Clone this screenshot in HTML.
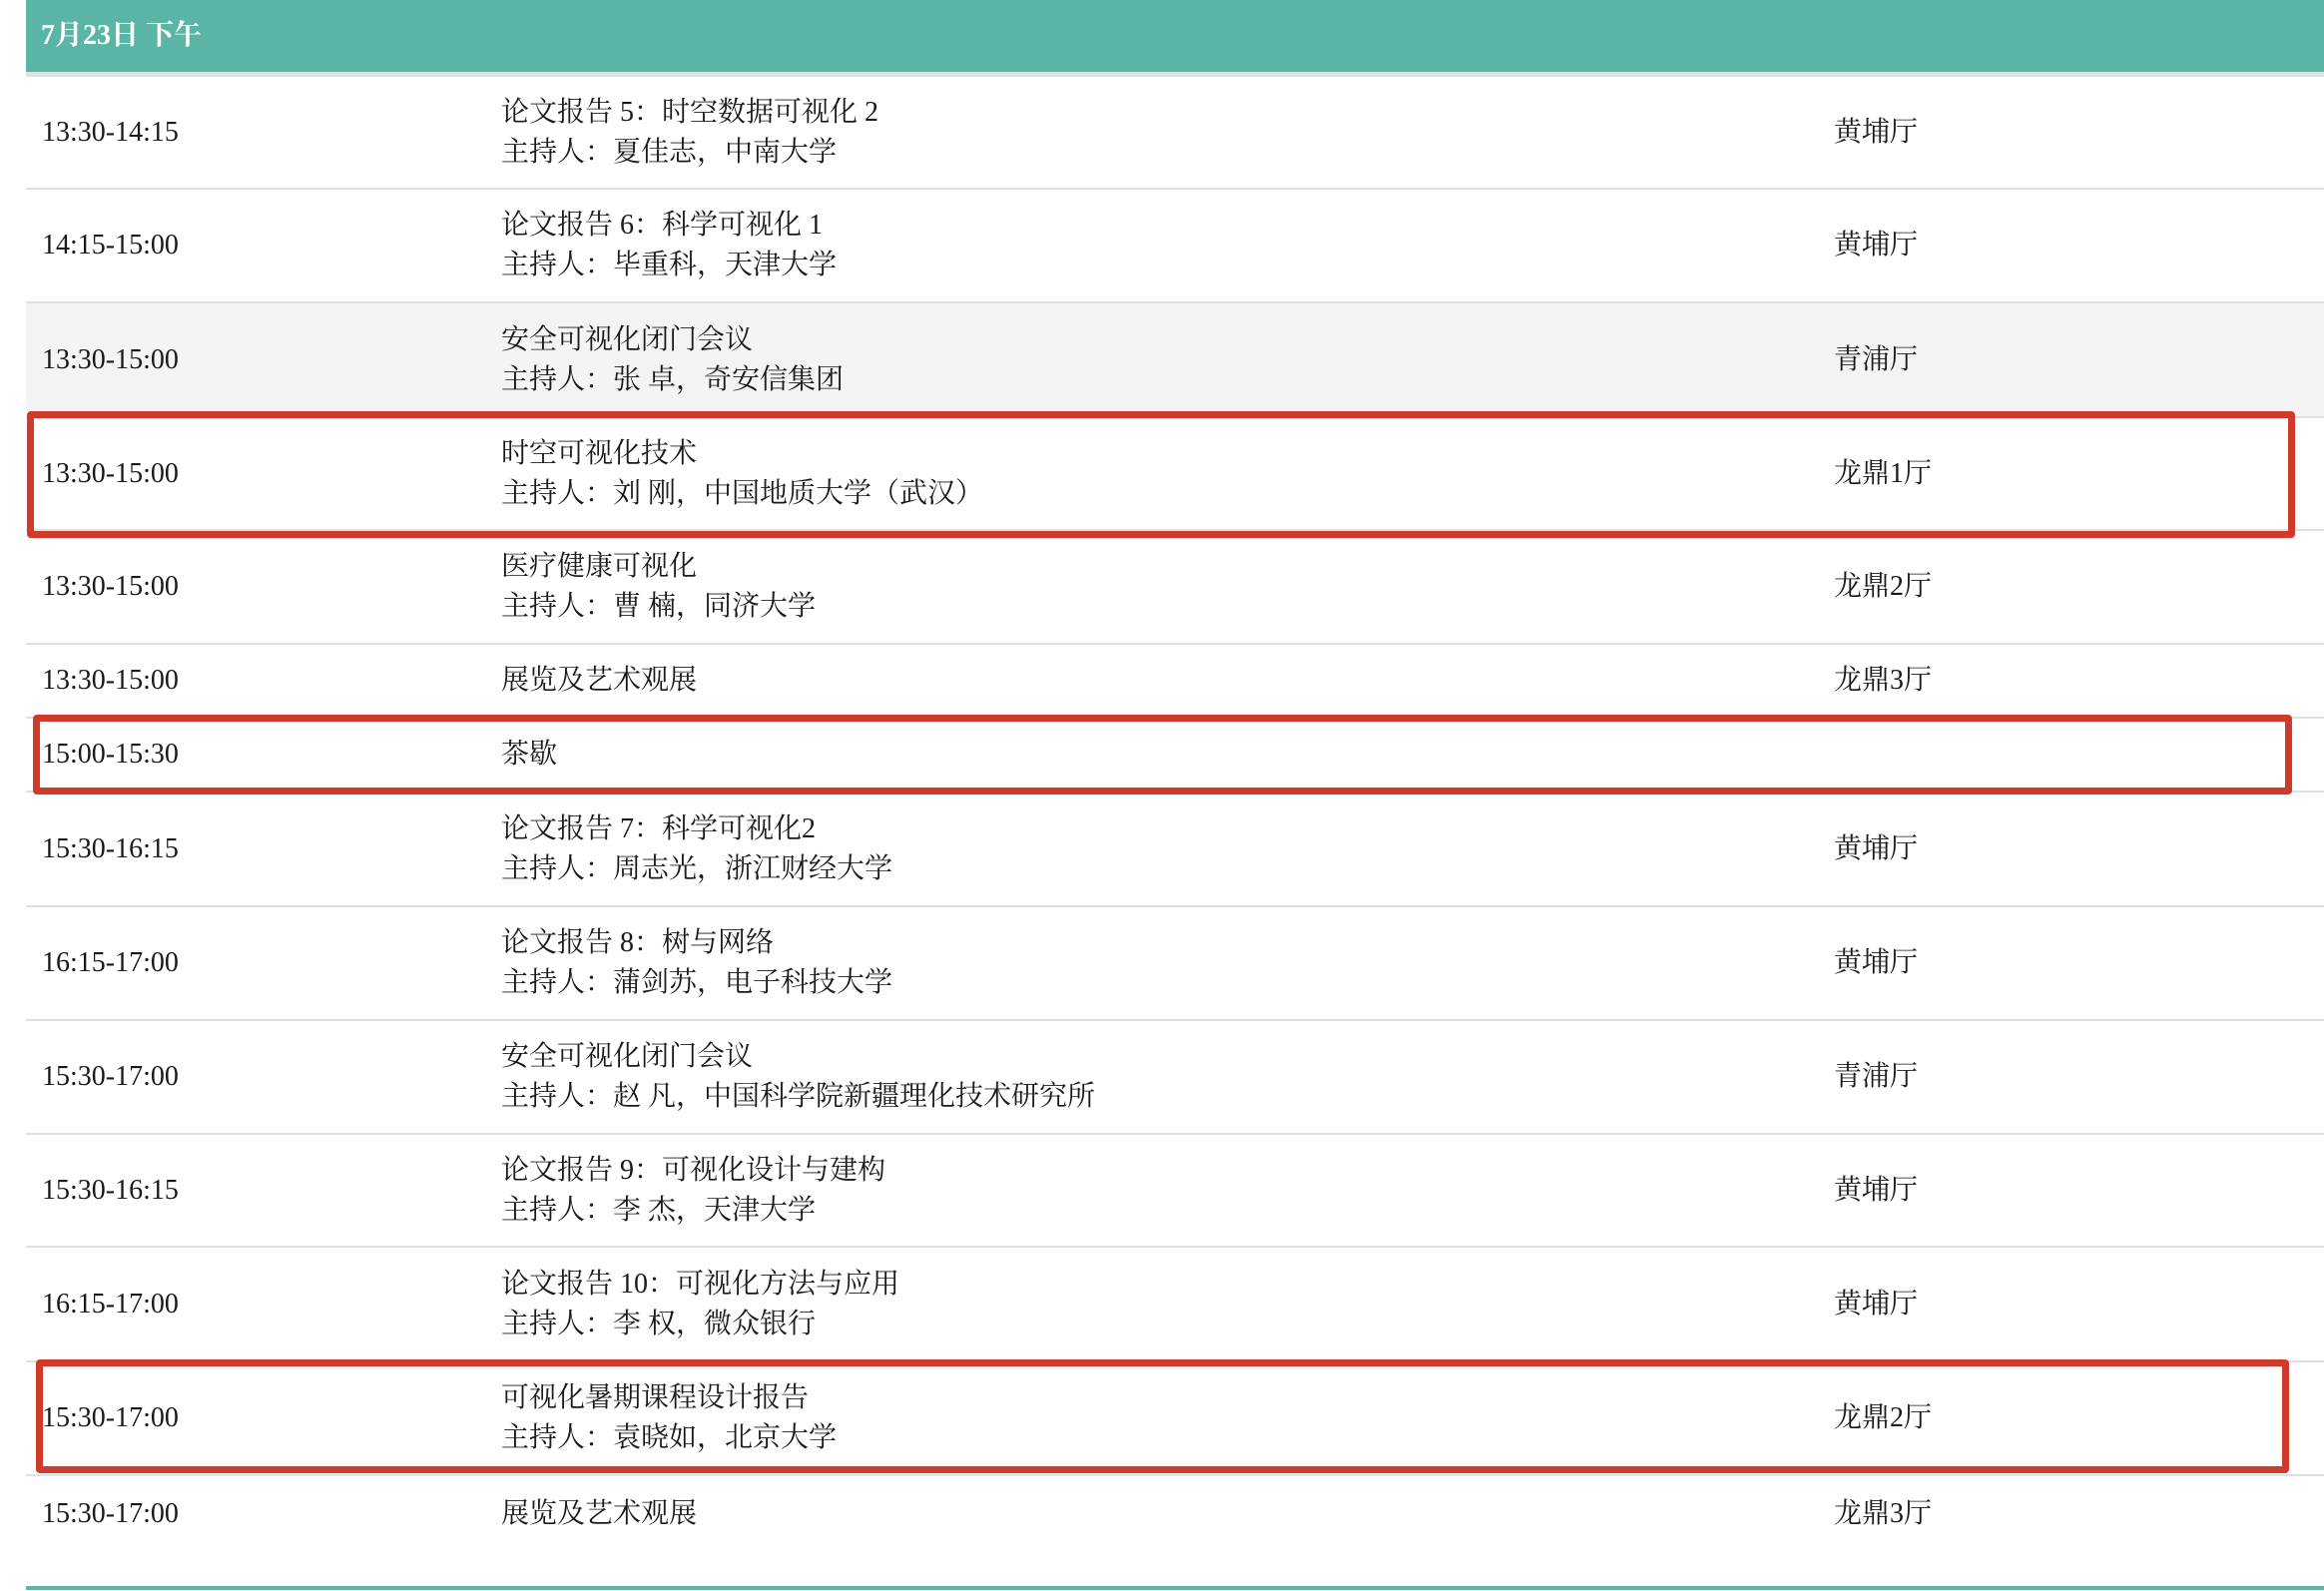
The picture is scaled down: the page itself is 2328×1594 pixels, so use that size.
<!DOCTYPE html>
<html><head><meta charset="utf-8"><style>
*{margin:0;padding:0;box-sizing:border-box}
body{width:2328px;height:1594px;background:#fff;position:relative;overflow:hidden;font-family:"Liberation Serif","Noto Serif CJK SC",serif;color:#1a1a1a;font-size:28px}
.hdr{position:absolute;left:26px;top:0;width:2302px;height:72px;background:#5bb5a6;color:#fff;font-weight:bold;font-size:28px;line-height:72px;padding-left:15px}
.hl{position:absolute;left:26px;top:72px;width:2302px;height:5px;background:#dde3e2}
.row{position:absolute;left:26px;width:2302px;border-bottom:2px solid #e0e0e0}
.row.g{background:#f4f4f4}
.t{position:absolute;left:16px;top:50%;transform:translateY(-50%);line-height:40px}
.m{position:absolute;left:476px;top:50%;transform:translateY(-50%);line-height:40px}
.r{position:absolute;left:1811px;top:50%;transform:translateY(-50%);line-height:40px}
.box{position:absolute;border:7px solid #d03a2a;border-radius:4px}
.bl{position:absolute;left:26px;top:1589px;width:2302px;height:4px;background:#5bb5a6}
</style></head><body>
<div class="hdr">7月23日 下午</div><div class="hl"></div>

<div class="row" style="top:77px;height:113px"><div class="t">13:30-14:15</div><div class="m">论文报告 5：时空数据可视化 2<br>主持人：夏佳志，中南大学</div><div class="r">黄埔厅</div></div>
<div class="row" style="top:190px;height:114px"><div class="t">14:15-15:00</div><div class="m">论文报告 6：科学可视化 1<br>主持人：毕重科，天津大学</div><div class="r">黄埔厅</div></div>
<div class="row g" style="top:304px;height:115px"><div class="t">13:30-15:00</div><div class="m">安全可视化闭门会议<br>主持人：张 卓，奇安信集团</div><div class="r">青浦厅</div></div>
<div class="row" style="top:419px;height:113px"><div class="t">13:30-15:00</div><div class="m">时空可视化技术<br>主持人：刘 刚，中国地质大学（武汉）</div><div class="r">龙鼎1厅</div></div>
<div class="row" style="top:532px;height:114px"><div class="t">13:30-15:00</div><div class="m">医疗健康可视化<br>主持人：曹 楠，同济大学</div><div class="r">龙鼎2厅</div></div>
<div class="row" style="top:646px;height:74px"><div class="t">13:30-15:00</div><div class="m">展览及艺术观展</div><div class="r">龙鼎3厅</div></div>
<div class="row" style="top:720px;height:74px"><div class="t">15:00-15:30</div><div class="m">茶歇</div></div>
<div class="row" style="top:794px;height:115px"><div class="t">15:30-16:15</div><div class="m">论文报告 7：科学可视化2<br>主持人：周志光，浙江财经大学</div><div class="r">黄埔厅</div></div>
<div class="row" style="top:909px;height:114px"><div class="t">16:15-17:00</div><div class="m">论文报告 8：树与网络<br>主持人：蒲剑苏，电子科技大学</div><div class="r">黄埔厅</div></div>
<div class="row" style="top:1023px;height:114px"><div class="t">15:30-17:00</div><div class="m">安全可视化闭门会议<br>主持人：赵 凡，中国科学院新疆理化技术研究所</div><div class="r">青浦厅</div></div>
<div class="row" style="top:1137px;height:113px"><div class="t">15:30-16:15</div><div class="m">论文报告 9：可视化设计与建构<br>主持人：李 杰，天津大学</div><div class="r">黄埔厅</div></div>
<div class="row" style="top:1250px;height:115px"><div class="t">16:15-17:00</div><div class="m">论文报告 10：可视化方法与应用<br>主持人：李 权，微众银行</div><div class="r">黄埔厅</div></div>
<div class="row" style="top:1365px;height:114px"><div class="t">15:30-17:00</div><div class="m">可视化暑期课程设计报告<br>主持人：袁晓如，北京大学</div><div class="r">龙鼎2厅</div></div>
<div class="row" style="top:1479px;height:76px;border-bottom:none"><div class="t">15:30-17:00</div><div class="m">展览及艺术观展</div><div class="r">龙鼎3厅</div></div>
<div class="bl"></div>

<div class="box" style="left:27px;top:412px;width:2272px;height:127px"></div>
<div class="box" style="left:33px;top:716px;width:2263px;height:80px"></div>
<div class="box" style="left:36px;top:1362px;width:2257px;height:114px"></div>
</body></html>
